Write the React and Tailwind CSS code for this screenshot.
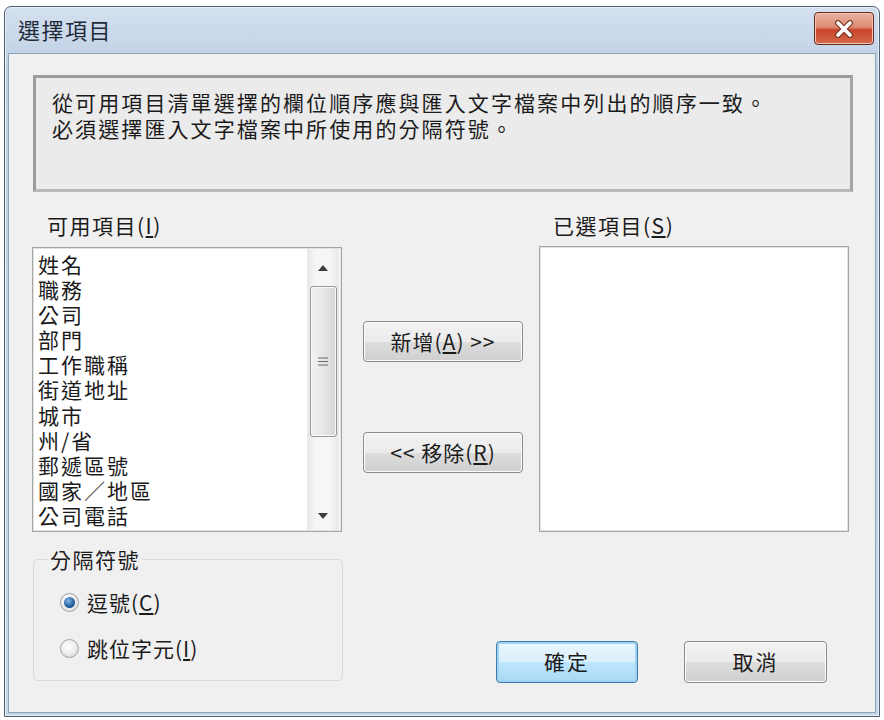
import React from "react";

const F = "font-['Noto_Sans_CJK_TC','Noto_Sans_CJK_SC',sans-serif]";

function WinButton({ children, isDefault, className = "" }) {
  return (
    <div
      className={
        "flex items-center justify-center rounded-[4px] border text-[21px] text-[#1b1b1b] " +
        (isDefault
          ? "border-[#3d7bad] shadow-[inset_0_0_0_2px_#9fd3f0] bg-[linear-gradient(to_bottom,#eaf6fd_0%,#d9f0fc_50%,#bee6fd_51%,#a7d9f5_100%)] "
          : "border-[#8a8a8a] shadow-[inset_0_0_0_1px_#fcfcfc] bg-[linear-gradient(to_bottom,#f2f2f2_0%,#ebebeb_50%,#dddddd_51%,#cfcfcf_100%)] ") +
        className
      }
    >
      {children}
    </div>
  );
}

function Radio({ checked, children }) {
  return (
    <div className="flex items-center h-[26px]">
      <div className="w-[19px] h-[19px] rounded-full border border-[#9aa3ad] bg-[radial-gradient(circle_at_40%_35%,#ffffff,#d8d8d8)] flex items-center justify-center">
        {checked ? (
          <div className="w-[11px] h-[11px] rounded-full bg-[radial-gradient(circle_at_40%_35%,#7fb6e6,#1f5d9b_60%,#14406f)]" />
        ) : (
          <div className="w-[11px] h-[11px] rounded-full bg-[radial-gradient(circle_at_40%_35%,#ffffff,#e6e6e6)]" />
        )}
      </div>
      <span className="ml-[8px] text-[21px] tracking-[1px] text-[#1b1b1b] leading-[26px]">{children}</span>
    </div>
  );
}

export default function App() {
  const items = ["姓名", "職務", "公司", "部門", "工作職稱", "街道地址", "城市", "州/省", "郵遞區號", "國家／地區", "公司電話"];
  return (
    <div className={"w-[884px] h-[720px] bg-white pt-[6px] pl-[4px] " + F}>
      <div className="w-[876px] h-[711px] rounded-t-[7px] border border-[#4f5f70] bg-[linear-gradient(to_bottom,#d3e0ef,#bfd0e5_60px,#c6d6e9)] flex flex-col px-[3px] pb-[3px] shadow-[inset_0_0_0_1px_#e6eef7]">
        {/* Title bar */}
        <div className="h-[46px] flex items-center justify-between pl-[10px] pr-[2px]">
          <span className="text-[22px] tracking-[1.5px] text-[#1e2a38] mt-[-1px]">選擇項目</span>
          <div className="w-[60px] h-[33px] mt-[-3px] rounded-[4px] border border-[#6b2a1d] bg-[linear-gradient(to_bottom,#eab3a0_0%,#dd8c72_45%,#c7432a_55%,#d46a4a_100%)] shadow-[inset_0_0_0_1px_#f4c6b5] flex items-center justify-center">
            <svg width="22" height="18" viewBox="0 0 22 18">
              <path d="M5 3 L17 15 M17 3 L5 15" stroke="#7a3a2a" strokeWidth="6" strokeLinecap="round" />
              <path d="M5 3 L17 15 M17 3 L5 15" stroke="#ffffff" strokeWidth="3.6" strokeLinecap="round" />
            </svg>
          </div>
        </div>
        {/* Client area */}
        <div className="flex-1 border border-[#8fa3ba] bg-[#f0f0f0] pl-[23px] flex flex-col">
          {/* Info box */}
          <div className="mt-[21px] ml-[1px] w-[820px] h-[117px] border-[3px] border-t-[#9b9b9b] border-l-[#9b9b9b] border-b-[#b9b9b9] border-r-[#a5a5a5] bg-[#ebebeb] pl-[16px] pt-[11px] text-[21px] leading-[26px] tracking-[2.1px] text-[#1b1b1b]">
            <div>從可用項目清單選擇的欄位順序應與匯入文字檔案中列出的順序一致。</div>
            <div>必須選擇匯入文字檔案中所使用的分隔符號。</div>
          </div>
          {/* Main */}
          <div className="flex mt-[21px]">
            {/* Left column */}
            <div className="w-[310px] flex flex-col">
              <div className="h-[25px] pl-[15px] text-[21px] leading-[25px] tracking-[1.5px] text-[#1b1b1b]">
                可用項目(<span className="underline">I</span>)
              </div>
              <div className="mt-[9px] h-[285px] border border-[#a5a5a5] shadow-[inset_0_0_0_1px_#e2e2e2] bg-white flex">
                <div className="flex-1 pl-[5px] pt-[4px] text-[21px] leading-[25.1px] tracking-[2px] text-[#1b1b1b]">
                  {items.map((t) => (
                    <div key={t}>{t}</div>
                  ))}
                </div>
                <div className="w-[32px] mr-[2px] my-[1px] bg-[linear-gradient(to_right,#e8e8e8,#f6f6f6_30%,#f6f6f6_70%,#e8e8e8)] flex flex-col items-center">
                  <div className="h-[37px] flex items-center justify-center">
                    <svg width="10" height="6" viewBox="0 0 10 6"><path d="M0 6 L5 0 L10 6 Z" fill="#3c3c3c" /></svg>
                  </div>
                  <div className="w-[27px] h-[151px] rounded-[3px] border border-[#979797] bg-[linear-gradient(to_right,#f2f2f2,#e6e6e6_50%,#d6d6d6)] shadow-[inset_0_0_0_1px_#fbfbfb] flex items-center justify-center">
                    <svg width="10" height="9" viewBox="0 0 10 9">
                      <path d="M0 1 H10 M0 4.5 H10 M0 8 H10" stroke="#6a6a6a" strokeWidth="1.2" />
                    </svg>
                  </div>
                  <div className="flex-1" />
                  <div className="h-[28px] flex items-center justify-center">
                    <svg width="10" height="6" viewBox="0 0 10 6"><path d="M0 0 L5 6 L10 0 Z" fill="#3c3c3c" /></svg>
                  </div>
                </div>
              </div>
              <fieldset className="mt-[14px] ml-[1px] w-[310px] h-[135px] border border-[#d5dde3] rounded-[5px] pl-[26px]">
                <legend className="ml-[-12px] px-[2px] text-[21px] leading-[26px] tracking-[1.5px] text-[#1b1b1b]">分隔符號</legend>
                <div className="mt-[17px]">
                  <Radio checked>
                    逗號(<span className="underline">C</span>)
                  </Radio>
                </div>
                <div className="mt-[20px]">
                  <Radio>
                    跳位字元(<span className="underline">I</span>)
                  </Radio>
                </div>
              </fieldset>
            </div>
            {/* Middle + right */}
            <div className="ml-[21px] flex flex-col">
              <div className="flex">
                <div className="w-[160px] flex flex-col">
                  <WinButton className="mt-[108px] h-[41px] tracking-[1px]">
                    新增(<span className="underline">A</span>) &gt;&gt;
                  </WinButton>
                  <WinButton className="mt-[70px] h-[41px] tracking-[1px]">
                    &lt;&lt; 移除(<span className="underline">R</span>)
                  </WinButton>
                </div>
                <div className="ml-[16px] w-[310px] flex flex-col">
                  <div className="h-[25px] pl-[14px] text-[21px] leading-[25px] tracking-[1.5px] text-[#1b1b1b]">
                    已選項目(<span className="underline">S</span>)
                  </div>
                  <div className="mt-[8px] h-[286px] border border-[#a5a5a5] shadow-[inset_0_0_0_1px_#e2e2e2] bg-white" />
                </div>
              </div>
              <div className="flex mt-[109px] pl-[133px]">
                <WinButton isDefault className="w-[142px] h-[42px] tracking-[2px]">確定</WinButton>
                <WinButton className="ml-[46px] w-[143px] h-[42px] tracking-[2px]">取消</WinButton>
              </div>
            </div>
          </div>
        </div>
      </div>
    </div>
  );
}
